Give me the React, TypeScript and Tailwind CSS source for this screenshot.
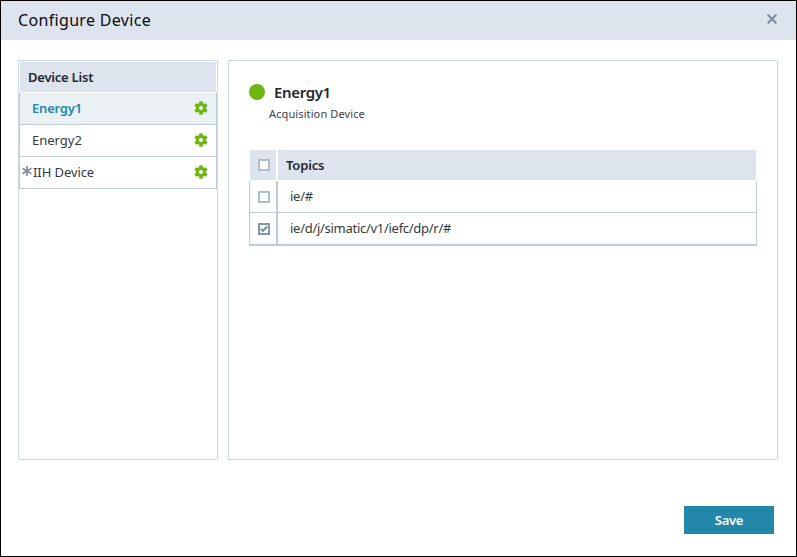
import React from "react";

function Gear() {
  return (
    <svg className="h-[14px] w-[14px] shrink-0" viewBox="2 2 20 20" fill="#71b513">
      <path d="M19.14 12.94c.04-.3.06-.61.06-.94 0-.32-.02-.64-.07-.94l2.03-1.58a.49.49 0 0 0 .12-.61l-1.92-3.32a.488.488 0 0 0-.59-.22l-2.39.96c-.5-.38-1.03-.7-1.62-.94l-.36-2.54a.484.484 0 0 0-.48-.41h-3.84c-.24 0-.43.17-.47.41l-.36 2.54c-.59.24-1.13.57-1.62.94l-2.39-.96c-.22-.08-.47 0-.59.22L2.74 8.87c-.12.21-.08.47.12.61l2.03 1.58c-.05.3-.09.63-.09.94s.02.64.07.94l-2.03 1.58a.49.49 0 0 0-.12.61l1.92 3.32c.12.22.37.29.59.22l2.39-.96c.5.38 1.03.7 1.62.94l.36 2.54c.05.24.24.41.48.41h3.84c.24 0 .44-.17.47-.41l.36-2.54c.59-.24 1.13-.56 1.62-.94l2.39.96c.22.08.47 0 .59-.22l1.92-3.32c.12-.22.07-.47-.12-.61l-2.01-1.58zM12 14.9A2.9 2.9 0 1 1 12 9.1a2.9 2.9 0 0 1 0 5.8z" />
    </svg>
  );
}

function Checkbox({ checked = false }: { checked?: boolean }) {
  return (
    <span
      className={`flex h-3 w-3 items-center justify-center border-2 bg-white ${
        checked ? "border-[#8296a8]" : "border-[#abbfcc]"
      }`}
    >
      {checked && (
        <svg className="h-2 w-2 shrink-0" viewBox="0 0 8 8" fill="none" stroke="#788e9f" strokeWidth="2.1">
          <path d="M0.8 4 L3 5.8 L7.2 1.6" />
        </svg>
      )}
    </span>
  );
}

function DeviceRow({ name, active = false, star = false }: { name: string; active?: boolean; star?: boolean }) {
  return (
    <li
      className={`flex h-8 items-center justify-between border-x border-b border-[#bccdd9] pr-2 pb-px ${
        active ? "bg-[#ebf0f4] font-semibold tracking-[-0.2px] text-[#2387aa]" : "bg-white text-[#343941]"
      } ${star ? "pl-[2px] tracking-[-0.08px]" : "pl-3"}`}
    >
      <span className="flex items-center text-[13px] leading-5">
        {star && (
          <svg
            className="mr-[1px] h-[10px] w-[10px] -translate-y-px"
            viewBox="0 0 10 10"
            stroke="#788e9f"
            strokeWidth="1.6"
          >
            <path d="M5 0V10M0.6 2.3L9.4 7.7M9.4 2.3L0.6 7.7" />
          </svg>
        )}
        {name}
      </span>
      <Gear />
    </li>
  );
}

export default function App() {
  return (
    <div className="flex h-[557px] w-[797px] flex-col border border-black bg-white font-['Noto_Sans',sans-serif] text-[#23272e]">
      <header className="flex h-[39px] shrink-0 items-center justify-between bg-[#dee4ed] pr-[19px] pb-px pl-[17px]">
        <h1 className="text-[16px] leading-6 tracking-[0.33px] text-[#0b0d10]">Configure Device</h1>
        <svg className="h-[10px] w-[10px] -translate-y-px" viewBox="0 0 10 10" stroke="#788e9f" strokeWidth="2.1">
          <path d="M0.6 0.6L9.4 9.4M9.4 0.6L0.6 9.4" />
        </svg>
      </header>

      <main className="flex h-[420px] shrink-0 gap-[10px] pt-5 pr-[18px] pl-[17px]">
        <aside className="w-[200px] shrink-0 border border-[#cdd8df]">
          <div className="m-px flex h-[30px] items-center bg-[#dee4ed] pt-px pl-2 text-[13px] font-semibold tracking-[-0.22px]">
            Device List
          </div>
          <ul>
            <DeviceRow name="Energy1" active />
            <DeviceRow name="Energy2" />
            <DeviceRow name="IIH Device" star />
          </ul>
        </aside>

        <section className="flex-1 border border-[#cdd8df] px-5 pt-[21px]">
          <div className="flex h-5 items-center gap-[9px]">
            <span className="h-4 w-4 rounded-full bg-[#71b513]" />
            <h2 className="text-[15px] leading-5 font-semibold tracking-[-0.35px]">Energy1</h2>
          </div>
          <p className="pt-[2px] pl-5 text-[11px] leading-5 tracking-[0.11px] text-[#3c4149]">Acquisition Device</p>

          <div className="mt-[26px]">
            <div className="flex h-[30px] gap-[2px] px-px text-[13px] font-semibold">
              <div className="flex w-[26px] items-center bg-[#dee4ed] pl-2">
                <Checkbox />
              </div>
              <div className="flex flex-1 items-center bg-[#dee4ed] pt-px pl-2 tracking-[-0.15px]">Topics</div>
            </div>
            <div className="mt-px border-x border-b-2 border-[#bccdd9] text-[13px] text-[#343941]">
              <div className="flex h-8 border-b border-[#bccdd9]">
                <div className="flex w-7 items-center border-r-2 border-[#bccdd9] pl-2">
                  <Checkbox />
                </div>
                <div className="flex items-center pl-3 tracking-[-0.28px]">ie/#</div>
              </div>
              <div className="flex h-[31px]">
                <div className="flex w-7 items-center border-r-2 border-[#bccdd9] pl-2">
                  <Checkbox checked />
                </div>
                <div className="flex items-center pl-3 tracking-[-0.28px]">ie/d/j/simatic/v1/iefc/dp/r/#</div>
              </div>
            </div>
          </div>
        </section>
      </main>

      <footer className="flex justify-end pt-[46px] pr-[22px]">
        <button className="h-7 w-[90px] bg-[#2387aa] pt-px text-[13px] font-semibold tracking-[-0.3px] text-white">
          Save
        </button>
      </footer>
    </div>
  );
}
